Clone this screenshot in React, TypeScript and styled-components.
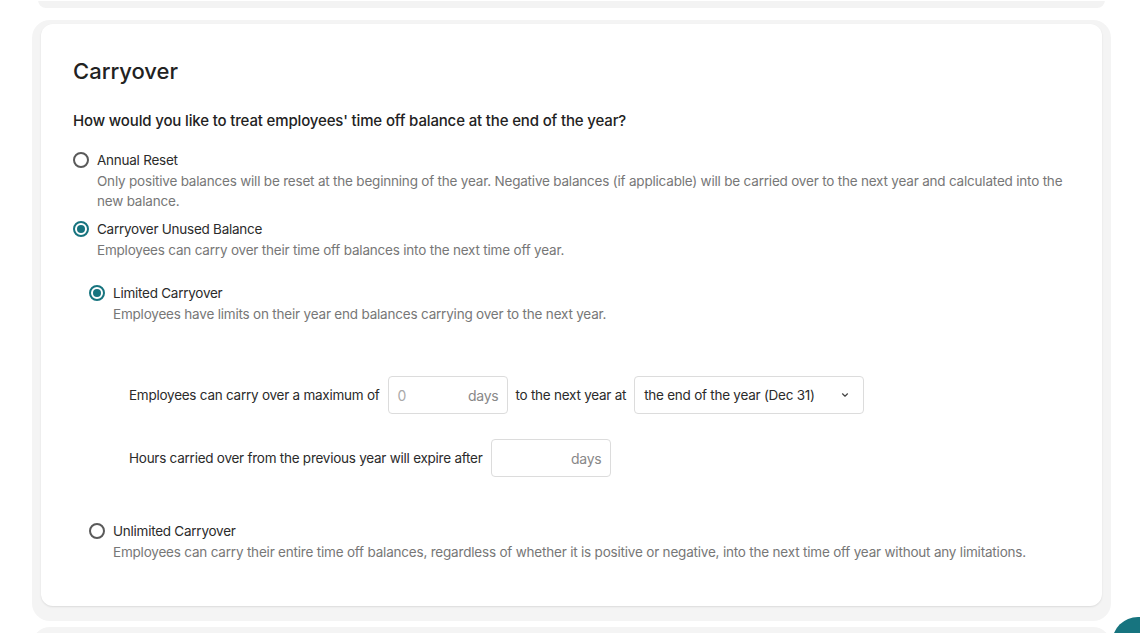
import React from "react";
import styled, { createGlobalStyle } from "styled-components";

const GlobalStyle = createGlobalStyle`
  html, body {
    margin: 0;
    padding: 0;
    background: #ffffff;
  }
  body {
    font-family: Inter, "Noto Sans", "Liberation Sans", sans-serif;
    color: #2b2b2b;
    overflow: hidden;
  }
`;

const Page = styled.div`
  position: relative;
  width: 1140px;
  height: 633px;
  overflow: hidden;
`;

const PrevStub = styled.div`
  margin: 0 35px 0 38px;
  height: 8px;
  background: #f3f3f3;
  border-top: 1px solid #ffffff;
  box-sizing: border-box;
  border-radius: 0 0 14px 14px;
`;

const Frame = styled.section`
  margin: 12px 29px 0 32px;
  padding: 4px 9px 15px 9px;
  background: #f4f4f4;
  border-radius: 18px;
`;

const Card = styled.div`
  background: #ffffff;
  border-radius: 12px;
  box-shadow: 0 1px 2px rgba(0, 0, 0, 0.1);
  padding: 33px 32px 44px 32px;
`;

const NextStub = styled.div`
  margin: 6px 29px 0 32px;
  height: 20px;
  background: #f4f4f4;
  border-radius: 18px 18px 0 0;
`;

const Title = styled.h2`
  margin: 0;
  font-size: 22px;
  line-height: 28px;
  font-weight: 500;
  color: #222;
`;

const Question = styled.p`
  margin: 25px 0 17px;
  font-size: 15px;
  line-height: 22px;
  font-weight: 500;
  letter-spacing: -0.15px;
  color: #222;
`;

const Options = styled.div<{ $gap: number }>`
  display: flex;
  flex-direction: column;
  gap: ${(p) => p.$gap}px;
`;

const Option = styled.div`
  display: grid;
  grid-template-columns: 16px 1fr;
  column-gap: 8px;
`;

const Radio = styled.span<{ $checked?: boolean }>`
  width: 16px;
  height: 16px;
  margin-top: 3px;
  box-sizing: border-box;
  border-radius: 50%;
  border: 2px solid ${(p) => (p.$checked ? "#17747f" : "#5a5a5a")};
  display: flex;
  align-items: center;
  justify-content: center;
  &::after {
    content: "";
    width: 8px;
    height: 8px;
    border-radius: 50%;
    background: ${(p) => (p.$checked ? "#17747f" : "transparent")};
  }
`;

const Label = styled.div`
  font-size: 13.5px;
  line-height: 22px;
  letter-spacing: -0.25px;
  color: #2b2b2b;
`;

const Desc = styled.div`
  font-size: 13.5px;
  line-height: 20px;
  letter-spacing: -0.2px;
  color: #777;
`;

const Nested = styled.div`
  grid-column: 1 / -1;
  padding-left: 16px;
  margin-top: 22px;
`;

const Rows = styled.div`
  display: flex;
  flex-direction: column;
  gap: 25px;
  margin: 52px 0 43px 24px;
  padding-left: 16px;
`;

const Row = styled.div`
  display: flex;
  align-items: center;
  gap: 8px;
  font-size: 13.5px;
  letter-spacing: -0.25px;
  color: #2b2b2b;
`;

const NumberBox = styled.div`
  width: 120px;
  height: 38px;
  box-sizing: border-box;
  border: 1px solid #dcdcdc;
  border-radius: 4px;
  display: flex;
  align-items: center;
  justify-content: space-between;
  padding: 0 8px 0 9px;
  font-size: 14px;
`;

const Placeholder = styled.span`
  color: #aaa;
`;

const Unit = styled.span`
  color: #888;
`;

const Select = styled.div`
  width: 230px;
  height: 38px;
  box-sizing: border-box;
  border: 1px solid #dcdcdc;
  border-radius: 4px;
  display: flex;
  align-items: center;
  justify-content: space-between;
  padding: 0 14px 0 9px;
  color: #2b2b2b;
`;

const ChatBubble = styled.div`
  position: absolute;
  left: 1112px;
  top: 617px;
  width: 52px;
  height: 52px;
  border-radius: 50%;
  background: #17747f;
`;

const Chevron = () => (
  <svg width="8" height="6" viewBox="0 0 8 6" fill="none">
    <path d="M1.5 1.8 L4 4.2 L6.5 1.8" stroke="#444" strokeWidth="1.2" strokeLinecap="round" strokeLinejoin="round" />
  </svg>
);

export default function App() {
  return (
    <Page>
      <GlobalStyle />
      <PrevStub />
      <Frame>
        <Card>
          <Title>Carryover</Title>
          <Question>How would you like to treat employees' time off balance at the end of the year?</Question>
          <Options $gap={7}>
            <Option>
              <Radio />
              <div>
                <Label>Annual Reset</Label>
                <Desc>
                  Only positive balances will be reset at the beginning of the year. Negative balances (if applicable) will
                  be carried over to the next year and calculated into the new balance.
                </Desc>
              </div>
            </Option>
            <Option>
              <Radio $checked />
              <div>
                <Label>Carryover Unused Balance</Label>
                <Desc>Employees can carry over their time off balances into the next time off year.</Desc>
              </div>
              <Nested>
                <Option>
                  <Radio $checked />
                  <div>
                    <Label>Limited Carryover</Label>
                    <Desc>Employees have limits on their year end balances carrying over to the next year.</Desc>
                  </div>
                </Option>
                <Rows>
                  <Row>
                    <span>Employees can carry over a maximum of</span>
                    <NumberBox>
                      <Placeholder>0</Placeholder>
                      <Unit>days</Unit>
                    </NumberBox>
                    <span>to the next year at</span>
                    <Select>
                      <span>the end of the year (Dec 31)</span>
                      <Chevron />
                    </Select>
                  </Row>
                  <Row>
                    <span>Hours carried over from the previous year will expire after</span>
                    <NumberBox>
                      <Placeholder />
                      <Unit>days</Unit>
                    </NumberBox>
                  </Row>
                </Rows>
                <Option>
                  <Radio />
                  <div>
                    <Label>Unlimited Carryover</Label>
                    <Desc>
                      Employees can carry their entire time off balances, regardless of whether it is positive or negative,
                      into the next time off year without any limitations.
                    </Desc>
                  </div>
                </Option>
              </Nested>
            </Option>
          </Options>
        </Card>
      </Frame>
      <NextStub />
      <ChatBubble />
    </Page>
  );
}
